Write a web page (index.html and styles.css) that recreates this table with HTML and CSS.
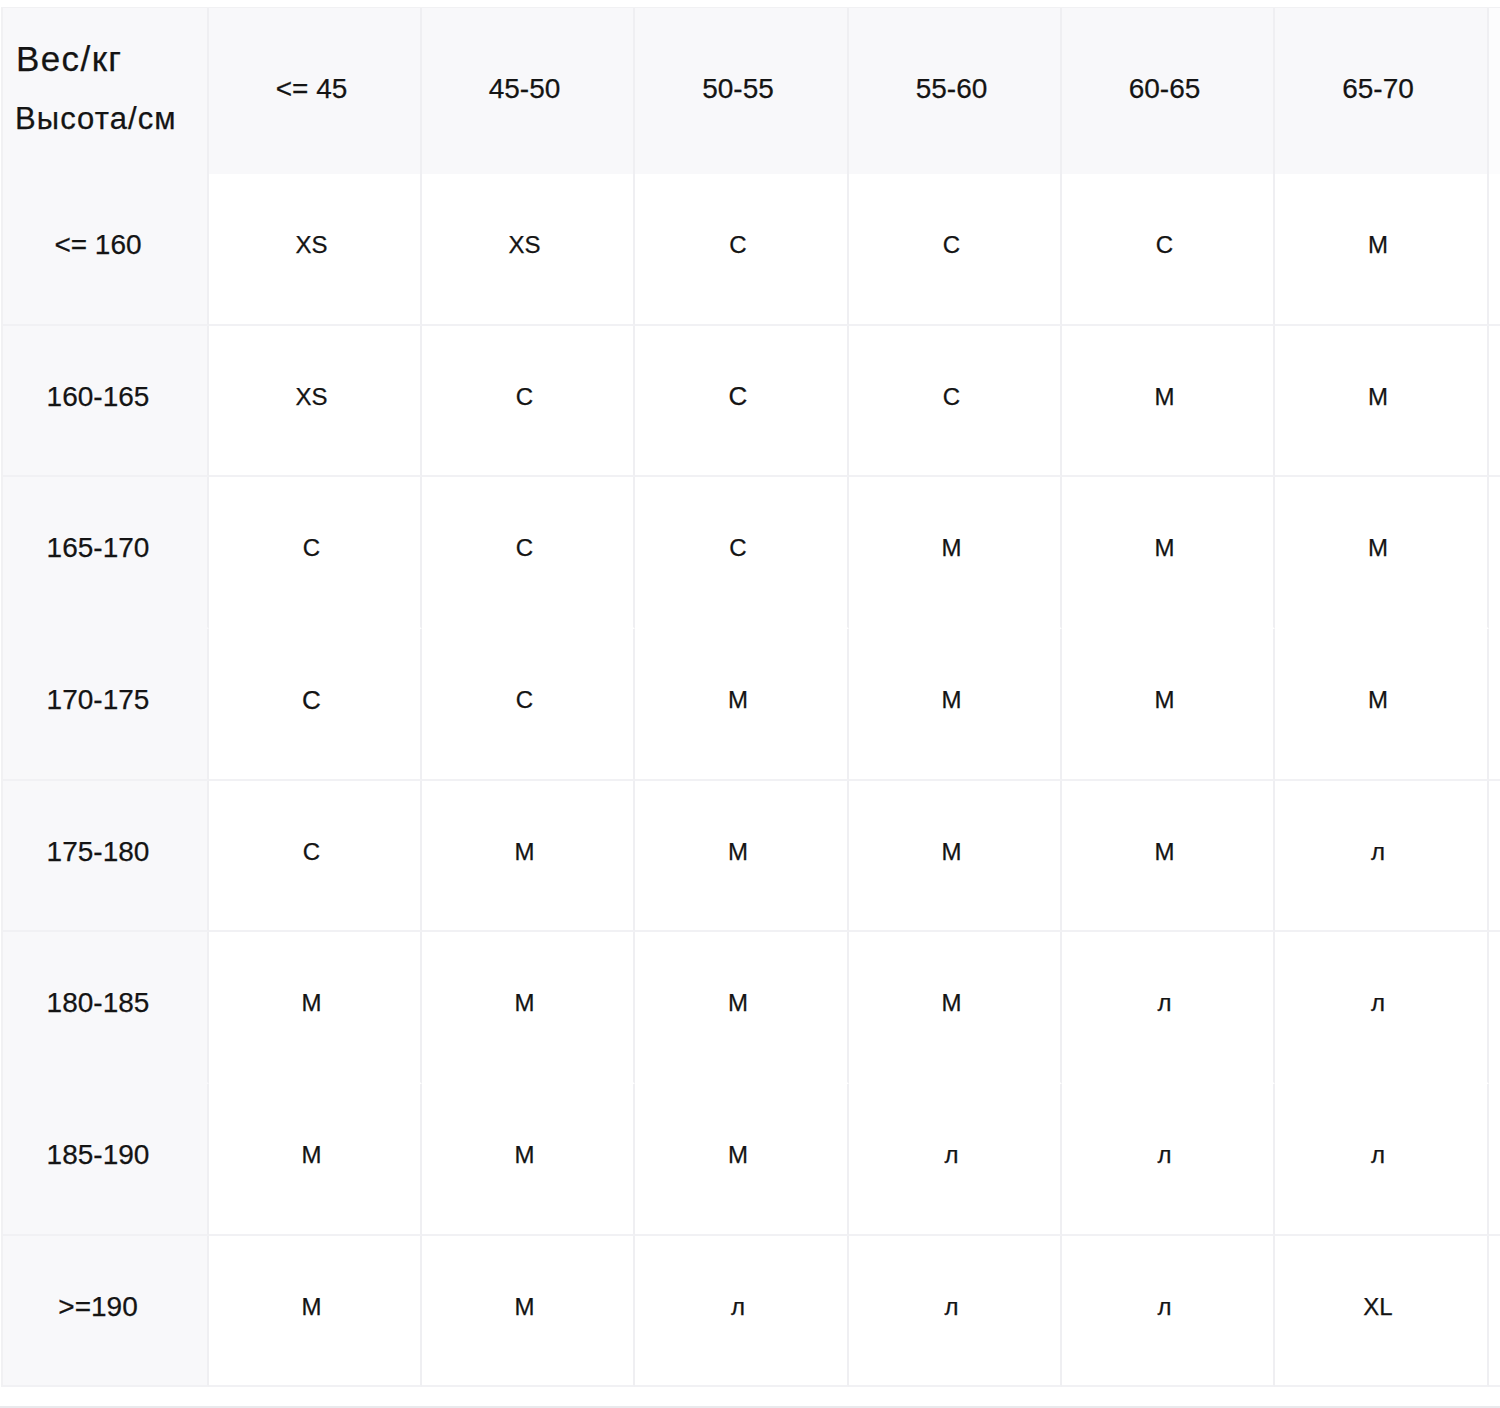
FILE: index.html
```html
<!DOCTYPE html>
<html lang="ru">
<head>
<meta charset="utf-8">
<title>Таблица размеров</title>
<link rel="stylesheet" href="styles.css">
</head>
<body>
<div class="page">
  <div class="chart">
    <div class="cell head corner">
      <span class="c-top">Вес/кг</span>
      <span class="c-bot">Высота/см</span>
    </div>
    <div class="cell head">&lt;= 45</div>
    <div class="cell head">45-50</div>
    <div class="cell head">50-55</div>
    <div class="cell head">55-60</div>
    <div class="cell head">60-65</div>
    <div class="cell head">65-70</div>
    <div class="cell tail head-tail"></div>

    <div class="cell side">&lt;= 160</div>
    <div class="cell val">XS</div><div class="cell val">XS</div><div class="cell val">С</div><div class="cell val">С</div><div class="cell val">С</div><div class="cell val">М</div>
    <div class="cell tail"></div>

    <div class="cell side">160-165</div>
    <div class="cell val">XS</div><div class="cell val">С</div><div class="cell val big">С</div><div class="cell val">С</div><div class="cell val">М</div><div class="cell val">М</div>
    <div class="cell tail"></div>

    <div class="cell side nb">165-170</div>
    <div class="cell val nb">С</div><div class="cell val nb">С</div><div class="cell val nb">С</div><div class="cell val nb">М</div><div class="cell val nb">М</div><div class="cell val nb">М</div>
    <div class="cell tail nb"></div>

    <div class="cell side">170-175</div>
    <div class="cell val big">С</div><div class="cell val">С</div><div class="cell val">М</div><div class="cell val">М</div><div class="cell val">М</div><div class="cell val">М</div>
    <div class="cell tail"></div>

    <div class="cell side">175-180</div>
    <div class="cell val">С</div><div class="cell val">М</div><div class="cell val">М</div><div class="cell val">М</div><div class="cell val">М</div><div class="cell val">л</div>
    <div class="cell tail"></div>

    <div class="cell side nb">180-185</div>
    <div class="cell val nb">М</div><div class="cell val nb">М</div><div class="cell val nb">М</div><div class="cell val nb">М</div><div class="cell val nb">л</div><div class="cell val nb">л</div>
    <div class="cell tail nb"></div>

    <div class="cell side">185-190</div>
    <div class="cell val">М</div><div class="cell val">М</div><div class="cell val">М</div><div class="cell val">л</div><div class="cell val">л</div><div class="cell val">л</div>
    <div class="cell tail"></div>

    <div class="cell side">&gt;=190</div>
    <div class="cell val">М</div><div class="cell val">М</div><div class="cell val">л</div><div class="cell val">л</div><div class="cell val">л</div><div class="cell val">XL</div>
    <div class="cell tail"></div>
  </div>
  <div class="foot"></div>
</div>
</body>
</html>
```

FILE: styles.css
```css
html, body {
  margin: 0;
  padding: 0;
  background: #ffffff;
}

body {
  font-family: "Liberation Sans", Arial, sans-serif;
  color: #141414;
  width: 1500px;
  height: 1408px;
  overflow: hidden;
  -webkit-text-stroke: 0.25px #141414;
}

.page {
  padding-top: 7px;
  padding-left: 1px;
}

.chart {
  display: grid;
  grid-template-columns: 206px 213px 213px 214px 213px 213px 214px 14px;
  grid-template-rows: 166px 152px 151px 152px 152px 151px 152px 152px 151px;
  border-top: 1px solid #f1f1f3;
  border-left: 2px solid #f1f1f3;
}

.cell {
  display: flex;
  align-items: center;
  justify-content: center;
  border-right: 2px solid #efeff2;
  border-bottom: 2px solid #f1f1f4;
  box-sizing: border-box;
  background: #ffffff;
}

.cell.nb {
  border-bottom-color: transparent;
}

.head {
  background: #f8f8fa;
  font-size: 28px;
  padding-bottom: 4px;
  padding-right: 6px;
  border-bottom: none;
}

.head-tail {
  background: #fcfcfd;
  border-bottom: none;
}

.corner {
  flex-direction: column;
  align-items: flex-start;
  justify-content: flex-start;
  padding: 30px 0 0 12px;
}

.c-top {
  font-size: 35px;
  line-height: 42px;
  letter-spacing: 1.4px;
  padding-left: 1px;
}

.c-bot {
  font-size: 31px;
  line-height: 42px;
  margin-top: 18px;
  letter-spacing: 1.1px;
}

.side {
  background: #f8f8fa;
  font-size: 28px;
  padding-bottom: 8px;
  padding-right: 14px;
}

.val {
  font-size: 24px;
  padding-bottom: 8px;
  padding-right: 6px;
}

.val.big {
  font-size: 26px;
}

.tail {
  border-right: 2px solid #f3f3f5;
}

.foot {
  height: 19px;
  border-bottom: 2px solid #e9e9ec;
  margin-left: -1px;
}
```
